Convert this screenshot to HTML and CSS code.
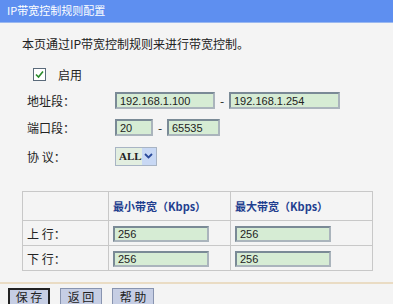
FILE: index.html
```html
<!DOCTYPE html>
<html>
<head>
<meta charset="utf-8">
<link rel="stylesheet" href="styles.css">
</head>
<body>
<div class="page">
  <div class="title">IP带宽控制规则配置</div>
  <div class="content">
    <p class="intro">本页通过IP带宽控制规则来进行带宽控制。</p>
    <div class="enable">
      <span class="chk"><svg width="11" height="11" viewBox="0 0 11 11"><path d="M2 5.5 L4.5 8 L9 2.5" fill="none" stroke="#2a8a2a" stroke-width="1.6"/></svg></span>
      <span>启用</span>
    </div>
    <div class="row r-addr">
      <span class="label">地址段：</span>
      <span class="field w-ip1">192.168.1.100</span>
      <span class="dash">-</span>
      <span class="field w-ip2">192.168.1.254</span>
    </div>
    <div class="row r-port">
      <span class="label">端口段：</span>
      <span class="field w-p1">20</span>
      <span class="dash">-</span>
      <span class="field w-p2">65535</span>
    </div>
    <div class="row r-proto">
      <span class="label">协 议：</span>
      <span class="select"><span class="sel-text">ALL</span><span class="sel-btn"><svg width="9" height="6" viewBox="0 0 9 6"><path d="M1 1 L4.5 4.5 L8 1" fill="none" stroke="#2a4a9a" stroke-width="1.8"/></svg></span></span>
    </div>
    <table class="bw">
      <tr class="head"><td class="c1"></td><td class="c2">最小带宽（Kbps）</td><td class="c3">最大带宽（Kbps）</td></tr>
      <tr><td class="c1">上 行：</td><td class="c2"><span class="field w-bw">256</span></td><td class="c3"><span class="field w-bw">256</span></td></tr>
      <tr><td class="c1">下 行：</td><td class="c2"><span class="field w-bw">256</span></td><td class="c3"><span class="field w-bw">256</span></td></tr>
    </table>
    <div class="rule"></div>
  </div>
  <div class="buttons">
    <span class="btn active">保 存</span>
    <span class="btn">返 回</span>
    <span class="btn">帮 助</span>
  </div>
</div>
</body>
</html>
```
FILE: styles.css
```css
html, body {
  margin: 0;
  padding: 0;
  background: #ffffff;
}
body {
  font-family: "Noto Sans CJK SC", "Liberation Sans", sans-serif;
  font-size: 12px;
  color: #222;
}
.page {
  width: 393px;
  height: 304px;
  background: #f4f4f4;
  overflow: hidden;
}
.title {
  height: 22px;
  line-height: 21px;
  background: #5e8ff0;
  color: #ffffff;
  padding-left: 7px;
  font-size: 11px;
  border-bottom: 1px solid #9ab8f0;
}
.content {
  padding: 0 0 0 22px;
}
.intro {
  margin: 0;
  padding-top: 11px;
  height: 22px;
  line-height: 20px;
  font-size: 12px;
}
.enable {
  display: flex;
  align-items: center;
  gap: 12px;
  padding-left: 11px;
  margin-top: 10px;
  height: 16px;
}
.chk {
  width: 11px;
  height: 11px;
  border: 1px solid #5a6a7a;
  background: #fff;
  display: flex;
}
.row {
  display: flex;
  align-items: center;
  padding-left: 5px;
}
.r-addr { margin-top: 9px; height: 18px; }
.r-port { margin-top: 9px; height: 18px; }
.r-proto { margin-top: 10px; height: 20px; }
.label {
  width: 88px;
}
.field {
  display: inline-block;
  box-sizing: border-box;
  height: 17px;
  line-height: 14px;
  border: 2px solid #7a8a96;
  border-right-color: #aab4bc;
  border-bottom-color: #aab4bc;
  background: #d6ecd4;
  padding-left: 3px;
  font-family: "Liberation Sans", sans-serif;
  font-size: 11px;
  color: #222;
}
.w-ip1 { width: 100px; }
.w-ip2 { width: 111px; }
.w-p1 { width: 38px; }
.w-p2 { width: 53px; }
.w-bw { width: 96px; height: 16px; line-height: 12px; }
.dash {
  width: 14px;
  text-align: center;
}
.select {
  display: flex;
  box-sizing: border-box;
  width: 42px;
  height: 19px;
  border: 1px solid #a8b4c4;
  background: #e2eee0;
  align-items: center;
}
.sel-text {
  flex: 1;
  padding-left: 3px;
  font-family: "Liberation Serif", serif;
  font-size: 11px;
  font-weight: bold;
}
.sel-btn {
  width: 15px;
  height: 17px;
  background: #c8d8f4;
  display: flex;
  align-items: center;
  justify-content: center;
}
.bw {
  margin-top: 25px;
  border-collapse: collapse;
  width: 351px;
  background: #f4f4f4;
  border: 1px solid #c4c4c4;
}
.bw td {
  border: 1px solid #c8c8c8;
  padding: 0 4px;
  height: 24px;
}
.bw tr.head td {
  height: 28px;
  color: #1f3f8f;
  font-weight: bold;
  font-size: 11px;
}
.bw .c1 { width: 77px; }
.bw .c2 { width: 113px; }
.rule {
  margin: 11px 0 0 -22px;
  height: 2px;
  background: #eadcc4;
}
.buttons {
  display: flex;
  gap: 10px;
  padding-left: 8px;
  margin-top: 4px;
}
.btn {
  display: inline-block;
  box-sizing: border-box;
  width: 42px;
  height: 18px;
  line-height: 15px;
  text-align: center;
  background: #c6cee4;
  border: 1px solid #8894b0;
  color: #222;
  font-size: 12px;
}
.btn.active {
  border: 2px solid #222;
  line-height: 13px;
}
```
